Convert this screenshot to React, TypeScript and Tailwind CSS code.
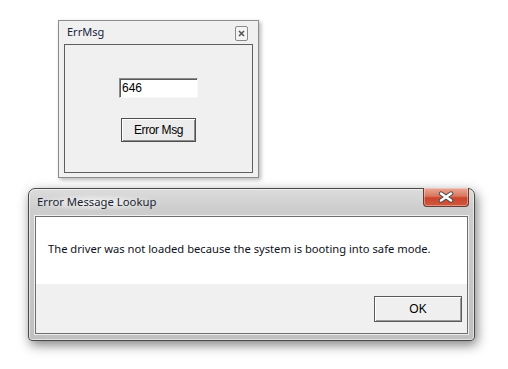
export default function App() {
  return (
    <div className="relative h-[369px] w-[508px] overflow-hidden bg-white">
      {/* small classic window */}
      <div className="absolute left-[58px] top-[20px] flex h-[158px] w-[201px] flex-col border border-[#8c8c8c] bg-[#f0f0f0] shadow-[2px_2px_4px_rgba(0,0,0,0.28)]">
        <div className="flex h-[23px] items-center justify-between pl-[8px] pr-[10px]">
          <span className="text-[11px] text-[#15223d] [font-family:'Noto_Sans',sans-serif]">ErrMsg</span>
          <div className="mt-[2px] flex h-[15px] w-[13px] items-center justify-center rounded-[2px] border border-[#8a8a8a] bg-[#f4f4f4]">
            <svg width="7" height="7" viewBox="0 0 7 7">
              <path d="M1 1 L6 6 M6 1 L1 6" stroke="#555" strokeWidth="1.6" />
            </svg>
          </div>
        </div>
        <div className="mx-[5px] mb-[4px] flex flex-1 flex-col items-center border border-[#5e5e5e] pt-[33px]">
          <div className="flex h-[20px] w-[79px] items-center border border-t-[#8a8a8a] border-l-[#8a8a8a] border-r-[#f8f8f8] border-b-[#f8f8f8] bg-white pl-[2px] shadow-[inset_1px_1px_0_#5a5a5a] [font-family:'Liberation_Sans',Arial,sans-serif] text-[12px] leading-none text-black">
            646
          </div>
          <button className="mt-[20px] flex h-[24px] w-[75px] items-center justify-center border border-[#4f4f4f] bg-[#ececec] shadow-[inset_1px_1px_0_#ffffff,inset_-1px_-1px_0_#8c8c8c] [font-family:'Liberation_Sans',Arial,sans-serif] text-[12px] tracking-[-0.4px] text-black">
            Error Msg
          </button>
        </div>
      </div>

      {/* aero basic dialog */}
      <div className="absolute left-[28px] top-[188px] flex h-[153px] w-[447px] flex-col rounded-t-[7px] rounded-b-[4px] border border-[#4a4a4a] bg-[linear-gradient(#dcdcdc,#cdcdcd_20px,#c0c0c0)] shadow-[2px_4px_12px_rgba(0,0,0,0.5),inset_0_0_0_1px_rgba(255,255,255,0.5)]">
        <div className="relative flex h-[27px] items-center pl-[8px]">
          <span className="-ml-[6px] rounded-full bg-[radial-gradient(closest-side,rgba(255,255,255,0.75),rgba(255,255,255,0))] px-[6px] text-[11.3px] text-[#1a1f33] [font-family:'Noto_Sans','Open_Sans',sans-serif]">
            Error Message Lookup
          </span>
          <div className="absolute -top-px right-[5px] flex h-[19px] w-[46px] items-center justify-center rounded-b-[4px] border border-t-0 border-[#6b3a30] bg-[linear-gradient(#eaa895,#d9785f_45%,#c9452c_55%,#cf5a3e)] shadow-[inset_0_0_0_1px_rgba(255,255,255,0.35)]">
            <svg width="16" height="12" viewBox="0 0 16 12">
              <path d="M3 2.5 L13 9.5 M13 2.5 L3 9.5" stroke="#4a4a4a" strokeWidth="4.4" strokeLinecap="round" />
              <path d="M3 2.5 L13 9.5 M13 2.5 L3 9.5" stroke="#ffffff" strokeWidth="2.6" strokeLinecap="round" />
            </svg>
          </div>
        </div>
        <div className="mx-[6px] mb-[6px] flex flex-1 flex-col border border-[#6e6e6e] shadow-[0_0_0_1px_rgba(255,255,255,0.7)]">
          <div className="flex h-[67px] items-center bg-white pb-[3px] pl-[12px] text-[11.2px] text-[#101020] [font-family:'Noto_Sans','Open_Sans',sans-serif]">
            The driver was not loaded because the system is booting into safe mode.
          </div>
          <div className="flex flex-1 items-start justify-end bg-[#f0f0f0] pr-[5px] pt-[12px]">
            <button className="flex h-[26px] w-[88px] items-center justify-center border border-[#5a5a5a] bg-[#efefef] text-[12px] text-black shadow-[inset_1px_1px_0_#ffffff,inset_-1px_-1px_0_#9a9a9a] [font-family:'Liberation_Sans',Arial,sans-serif]">
              OK
            </button>
          </div>
        </div>
      </div>
    </div>
  );
}
